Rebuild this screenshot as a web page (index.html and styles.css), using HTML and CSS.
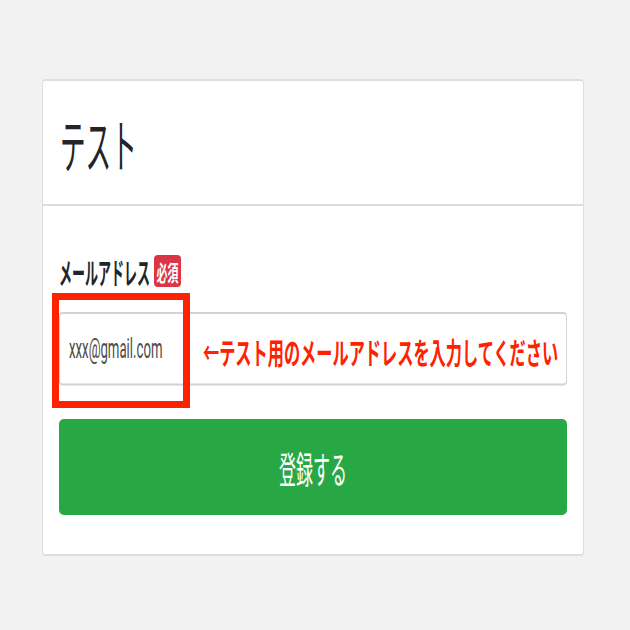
FILE: index.html
```html
<!DOCTYPE html>
<html lang="ja">

<head>
    <meta charset="UTF-8">
    <meta name="viewport" content="width=device-width, initial-scale=1.0">
    <title>テスト</title>
    <link rel="stylesheet" href="styles.css">
</head>

<body>
    <div class="page">
        <div class="card">
            <div class="card-header">
                <h1><span class="tall">テスト</span></h1>
            </div>
            <div class="card-body">
                <label class="form-label" for="email">
                    <span class="tall">メールアドレス</span>
                    <span class="badge"><span class="tall">必須</span></span>
                </label>
                <div class="field">
                    <input type="text" id="email" class="form-control" value="xxx@gmail.com">
                    <!-- 注釈（赤枠と説明） -->
                    <div class="mark-box"></div>
                    <div class="mark-note"><span class="tall">←テスト用のメールアドレスを入力してください</span></div>
                </div>
                <button class="btn-submit"><span class="tall">登録する</span></button>
            </div>
        </div>
    </div>
</body>

</html>
```

FILE: styles.css
```css
html,
body {
    margin: 0;
    padding: 0;
    width: 100%;
    height: 100%;
    overflow: hidden;
}

body {
    background-color: #f2f2f2;
    color: #212529;
    font-family: "Noto Sans CJK JP", sans-serif;
}

/* 横に縮んだ画面なので、文字は縦に伸ばして再現する */
.tall {
    display: inline-block;
    transform: scaleY(2.2);
}

.page {
    padding: 79px 46px 0 42px;
}

.card {
    background-color: #fff;
    border: 1px solid #dedede;
    border-top-width: 2px;
    border-bottom-width: 2px;
    border-radius: 4px;
}

.card-header {
    display: flex;
    align-items: center;
    height: 123px;
    padding: 0 17px;
    border-bottom: 2px solid #dedede;
}

.card-header h1 {
    margin: 0;
    font-size: 25.6px;
    font-weight: 400;
}

.card-header h1 .tall {
    transform: scaleY(2.25);
}

.card-body {
    padding: 49px 16px 39px;
}

.form-label {
    display: flex;
    align-items: center;
    gap: 4px;
    height: 32px;
    margin-bottom: 25px;
    font-size: 13px;
    font-weight: 700;
}

.form-label > .tall {
    transform: scaleY(2.3);
}

.badge {
    display: flex;
    justify-content: center;
    align-items: center;
    width: 27px;
    height: 32px;
    border-radius: 4px;
    background-color: #dc3545;
    color: #fff;
    font-size: 11px;
    font-weight: 700;
}

.badge .tall {
    transform: scaleY(1.95);
}

.field {
    position: relative;
    height: 73px;
    margin-bottom: 34px;
}

/* 入力欄も縦に伸ばす（2.1倍で高さ73px） */
.form-control {
    display: block;
    width: 100%;
    height: 34.76px;
    box-sizing: border-box;
    margin: 0;
    padding: 0 9px;
    border: 1px solid #ced4da;
    border-radius: 4px / 2px;
    background-color: #fff;
    color: #4d4d4d;
    font-family: Roboto, "Noto Sans CJK JP", sans-serif;
    font-size: 13.2px;
    transform: scaleY(2.1);
    transform-origin: 0 0;
}

/* 赤枠 */
.mark-box {
    position: absolute;
    top: -19px;
    left: -7px;
    width: 138px;
    height: 115px;
    box-sizing: border-box;
    border: 7px solid #fe2200;
}

.mark-note {
    position: absolute;
    top: 29px;
    left: 144px;
    white-space: nowrap;
    font-size: 16.2px;
    font-weight: 700;
    line-height: 20px;
    color: #fe2200;
}

.mark-note .tall {
    transform: scaleY(1.85);
}

.btn-submit {
    display: flex;
    justify-content: center;
    align-items: center;
    width: 100%;
    height: 96px;
    border: none;
    border-radius: 5px;
    background-color: #28a745;
    color: #fff;
    font-family: "Noto Sans CJK JP", sans-serif;
    font-size: 17px;
    cursor: pointer;
}
```
